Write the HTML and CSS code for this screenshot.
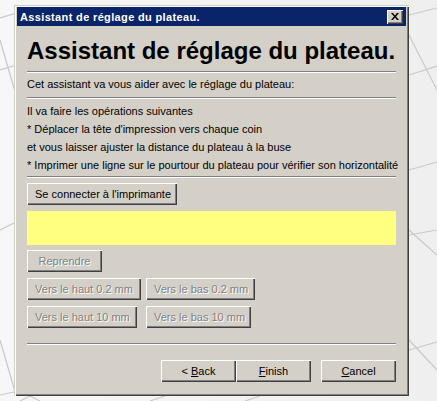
FILE: index.html
```html
<!DOCTYPE html>
<html lang="fr">
<head>
<meta charset="utf-8">
<title>Assistant de réglage du plateau.</title>
<link rel="stylesheet" href="styles.css">
</head>
<body>
<svg class="scene" width="437" height="401" viewBox="0 0 437 401">
  <g stroke="#c9c9c9" stroke-width="1.2" fill="none">
    <line x1="0" y1="18" x2="40" y2="6"/>
    <line x1="0" y1="70" x2="20" y2="64"/>
    <line x1="0" y1="40" x2="16" y2="95"/>
    <line x1="0" y1="230" x2="16" y2="222"/>
    <line x1="0" y1="340" x2="16" y2="395"/>
    <line x1="0" y1="395" x2="14" y2="392"/>
    <line x1="20" y1="401" x2="30" y2="396"/>
    <line x1="30" y1="396" x2="40" y2="401"/>
    <line x1="150" y1="401" x2="165" y2="396"/>
    <line x1="245" y1="401" x2="260" y2="396"/>
    <line x1="409" y1="15" x2="437" y2="8"/>
    <line x1="409" y1="75" x2="437" y2="66"/>
    <line x1="409" y1="35" x2="437" y2="90"/>
    <line x1="409" y1="170" x2="437" y2="162"/>
    <line x1="409" y1="235" x2="437" y2="230"/>
    <line x1="409" y1="350" x2="437" y2="342"/>
    <line x1="409" y1="340" x2="437" y2="370"/>
    <line x1="409" y1="230" x2="437" y2="255"/>
  </g>
</svg>
<div class="window">
  <div class="titlebar">
    <span class="title">Assistant de réglage du plateau.</span>
    <span class="close">
      <svg width="8" height="7" viewBox="0 0 8 7"><path d="M0 0h2l2 2.5L6 0h2L5 3.5 8 7H6L4 4.5 2 7H0l3-3.5z" fill="#000"/></svg>
    </span>
  </div>
  <div class="content">
    <h1 class="heading">Assistant de réglage du plateau.</h1>
    <div class="sep"></div>
    <p class="intro">Cet assistant va vous aider avec le réglage du plateau:</p>
    <div class="sep"></div>
    <div class="desc">
      <p>Il va faire les opérations suivantes</p>
      <p>* Déplacer la tête d'impression vers chaque coin</p>
      <p>et vous laisser ajuster la distance du plateau à la buse</p>
      <p>* Imprimer une ligne sur le pourtour du plateau pour vérifier son horizontalité</p>
    </div>
    <div class="sep sep-tight"></div>
    <div class="row"><button class="btn btn-connect">Se connecter à l'imprimante</button></div>
    <div class="status"></div>
    <div class="row"><button class="btn btn-resume" disabled>Reprendre</button></div>
    <div class="moves">
      <button class="btn btn-up02" disabled>Vers le haut 0.2 mm</button>
      <button class="btn btn-down02" disabled>Vers le bas 0.2 mm</button>
      <button class="btn btn-up10" disabled>Vers le haut 10 mm</button>
      <button class="btn btn-down10" disabled>Vers le bas 10 mm</button>
    </div>
    <div class="sep sep-bottom"></div>
    <div class="footer">
      <button class="btn btn-nav">&lt; <u>B</u>ack</button>
      <button class="btn btn-nav"><u>F</u>inish</button>
      <button class="btn btn-nav btn-cancel"><u>C</u>ancel</button>
    </div>
  </div>
</div>
</body>
</html>
```
FILE: styles.css
```css
html, body {
  margin: 0;
  padding: 0;
}
body {
  width: 437px;
  height: 401px;
  background: linear-gradient(90deg, #f7f7f7 0%, #efefef 100%);
  font-family: "Liberation Sans", Arial, sans-serif;
  font-size: 11px;
  color: #000;
  position: relative;
  overflow: hidden;
}
.scene {
  position: absolute;
  left: 0;
  top: 0;
}
.window {
  position: relative;
  margin: 5px 0 0 14px;
  width: 395px;
  height: 391px;
  box-sizing: border-box;
  background: #d4d0c8;
  padding: 2px 3px 3px 3px;
  box-shadow: inset 1px 1px #d4d0c8, inset 2px 2px #ffffff, inset -1px -1px #404040, inset -2px -2px #808080;
}
.titlebar {
  height: 19px;
  background: #0a246a;
  display: flex;
  align-items: center;
  justify-content: space-between;
  padding: 0 3px 0 3px;
}
.title {
  color: #fff;
  font-weight: bold;
  font-size: 11px;
  letter-spacing: 0.35px;
}
.close {
  width: 16px;
  height: 14px;
  box-sizing: border-box;
  background: #d4d0c8;
  box-shadow: inset 1px 1px #fff, inset -1px -1px #404040, inset -2px -2px #808080;
  display: flex;
  align-items: center;
  justify-content: center;
  padding: 0 1px 1px 0;
}
.content {
  padding: 10px 10px 0 10px;
}
.heading {
  margin: 0;
  font-size: 24px;
  line-height: 30px;
  font-weight: bold;
  letter-spacing: 0;
  white-space: nowrap;
}
.sep {
  border-top: 1px solid #808080;
  border-bottom: 1px solid #fff;
  height: 0;
  margin-top: 5px;
}
.intro {
  margin: 5px 0 6px 0;
  line-height: 13px;
}
.desc {
  margin-top: 3px;
}
.desc p {
  margin: 0;
  line-height: 18px;
  white-space: nowrap;
}
.sep-tight {
  margin-top: 2px;
}
.row {
  display: flex;
  margin-top: 5px;
}
.btn {
  font-family: "Liberation Sans", Arial, sans-serif;
  font-size: 11px;
  height: 22px;
  padding: 0 8px;
  border: none;
  background: #d4d0c8;
  color: #000;
  box-shadow: inset 1px 1px #fff, inset -1px -1px #404040, inset -2px -2px #808080;
  white-space: nowrap;
}
.btn:disabled {
  color: #808080;
  text-shadow: 1px 1px #fff;
}
.btn-connect {
  width: 150px;
}
.status {
  margin-top: 6px;
  height: 34px;
  background: #ffff80;
}
.btn-resume {
  width: 75px;
}
.moves {
  margin-top: 6px;
  display: grid;
  grid-template-columns: 119px auto;
  row-gap: 6px;
  justify-items: start;
}
.btn-up02 { width: 114px; }
.btn-down02 { width: 109px; }
.btn-up10 { width: 110px; }
.btn-down10 { width: 105px; }
.sep-bottom {
  margin-top: 15px;
}
.footer {
  margin-top: 15px;
  display: flex;
  justify-content: flex-end;
}
.btn-nav {
  width: 75px;
}
.btn-cancel {
  margin-left: 10px;
}
u {
  text-decoration: underline;
  text-underline-offset: 1px;
}
```
